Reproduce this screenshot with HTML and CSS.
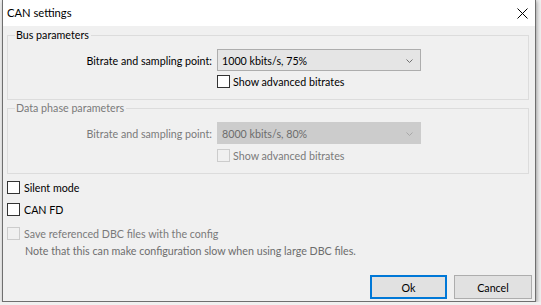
FILE: index.html
```html
<!DOCTYPE html>
<html>
<head>
<meta charset="utf-8">
<title>CAN settings</title>
<link rel="stylesheet" href="styles.css">
</head>
<body>
<div class="window">
  <div class="titlebar">
    <span class="title">CAN settings</span>
    <svg class="close" width="11" height="11" viewBox="0 0 11 11"><path d="M0.5 0.5 L10.5 10.5 M10.5 0.5 L0.5 10.5" stroke="#000" stroke-width="1" fill="none"/></svg>
  </div>
  <div class="content">
    <fieldset class="group">
      <legend>Bus parameters</legend>
      <div class="row">
        <span class="lbl">Bitrate and sampling point:</span>
        <div class="combo">
          <span>1000 kbits/s, 75%</span>
          <svg class="chev" width="7" height="4" viewBox="0 0 7 4"><path d="M0.5 0.5 L3.5 3.5 L6.5 0.5" stroke="#707070" fill="none"/></svg>
        </div>
      </div>
      <div class="check indent first">
        <span class="box"></span><span>Show advanced bitrates</span>
      </div>
    </fieldset>
    <fieldset class="group group2 disabled">
      <legend>Data phase parameters</legend>
      <div class="row">
        <span class="lbl">Bitrate and sampling point:</span>
        <div class="combo">
          <span>8000 kbits/s, 80%</span>
          <svg class="chev" width="7" height="4" viewBox="0 0 7 4"><path d="M0.5 0.5 L3.5 3.5 L6.5 0.5" stroke="#a8a8a8" fill="none"/></svg>
        </div>
      </div>
      <div class="check indent second">
        <span class="box"></span><span>Show advanced bitrates</span>
      </div>
    </fieldset>
    <div class="check silent"><span class="box"></span><span>Silent mode</span></div>
    <div class="check canfd"><span class="box"></span><span>CAN FD</span></div>
    <div class="check save disabled"><span class="box"></span><span>Save referenced DBC files with the config</span></div>
    <div class="note">Note that this can make configuration slow when using large DBC files.</div>
    <div class="buttons">
      <button class="btn btn-default">Ok</button>
      <button class="btn btn-cancel">Cancel</button>
    </div>
  </div>
</div>
</body>
</html>
```
FILE: styles.css
```css
html, body {
  margin: 0;
  padding: 0;
  background: #f0f0f0;
}

body {
  font-family: "Lato", "Liberation Sans", sans-serif;
  font-size: 10.7px;
  color: #000;
}

.window {
  box-sizing: border-box;
  margin-left: 2px;
  width: 534px;
  height: 302px;
  border: 1px solid #6f6f6f;
  border-top: 0;
  background: #f0f0f0;
  box-shadow: 1px 1px 4px rgba(0, 0, 0, 0.35);
  display: flex;
  flex-direction: column;
}

.titlebar {
  height: 26px;
  background: #fff;
  display: flex;
  align-items: center;
  justify-content: space-between;
  padding-left: 4px;
  flex: none;
}

.title {
  font-size: 11.2px;
  line-height: 26px;
}

.close {
  margin-right: 7px;
  margin-top: 1px;
}

.content {
  flex: 1;
  padding: 2px 3px 0 4px;
  display: flex;
  flex-direction: column;
}

.group {
  margin: 0 3px 0 0;
  padding: 0 0 11px 0;
  border: 1px solid #dcdcdc;
  min-inline-size: 0;
}

.group legend {
  margin-left: 7px;
  padding: 0 2px 0 1px;
  line-height: 14px;
}

.group2 {
  margin-top: 1px;
}

.row {
  display: flex;
  align-items: center;
  margin-top: 7px;
  height: 22px;
}

.lbl {
  width: 204px;
  margin-right: 5px;
  text-align: right;
}

.combo {
  box-sizing: border-box;
  width: 204px;
  height: 22px;
  border: 1px solid #adadad;
  background: #e5e5e5;
  display: flex;
  align-items: center;
  justify-content: space-between;
  padding: 0 7px 0 4px;
}

.chev {
  margin-top: 1px;
}

.check {
  display: flex;
  align-items: center;
  height: 13px;
  gap: 4px;
}

.box {
  box-sizing: border-box;
  width: 13px;
  height: 13px;
  border: 1px solid #333;
  background: #fff;
  flex: none;
}

.indent {
  margin-left: 209px;
  gap: 3px;
}

.first {
  margin-top: 4px;
}

.second {
  margin-top: 5px;
}

.silent {
  margin-top: 7px;
}

.canfd {
  margin-top: 9px;
}

.save {
  margin-top: 11px;
}

.disabled,
.disabled legend {
  color: #7a7a7a;
}

.disabled .combo {
  background: #cccccc;
  border-color: #cccccc;
  color: #6d6d6d;
}

.disabled .box {
  border-color: #cccccc;
  background: #f0f0f0;
}

.note {
  margin-top: 4px;
  margin-left: 18px;
  line-height: 14px;
  color: #6d6d6d;
}

.buttons {
  margin-top: 17px;
  display: flex;
  justify-content: flex-end;
  gap: 7px;
}

.btn {
  box-sizing: border-box;
  height: 24px;
  font-family: inherit;
  font-size: 10.7px;
  color: #000;
  background: #e1e1e1;
  border: 1px solid #adadad;
  padding: 0;
  margin: 0;
}

.btn-default {
  width: 77px;
  border: 2px solid #0078d7;
}

.btn-cancel {
  width: 78px;
}
```
